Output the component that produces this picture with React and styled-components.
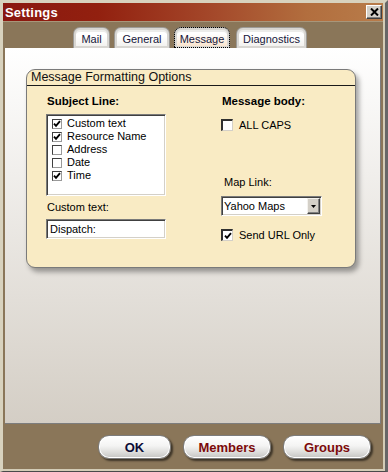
import styled, { createGlobalStyle } from 'styled-components';

const GlobalStyle = createGlobalStyle`
  html, body {
    margin: 0;
    padding: 0;
    background: #ffffff;
  }
  body {
    font-family: "Liberation Sans", Arial, sans-serif;
    font-size: 11px;
    color: #000;
  }
  * {
    box-sizing: border-box;
  }
`;

const Frame = styled.div`
  width: 388px;
  height: 472px;
  border-style: solid;
  border-width: 3px 3px 1px 3px;
  border-color: #d8d2be #676767 #4a4a4a #d8d2be;
`;
const FrameInner = styled.div`
  height: 100%;
  display: flex;
  flex-direction: column;
  background: #8a7659;
  border-right: 2px solid #d3ccb6;
  border-bottom: 2px solid #d3ccb6;
`;

const TitleBar = styled.header`
  height: 19px;
  flex: 0 0 19px;
  display: flex;
  align-items: center;
  justify-content: space-between;
  padding: 0 1px 0 2px;
  border-bottom: 1px solid #a8967a;
  background: linear-gradient(to right, #8a1810 0%, #92200f 25%, #a4482a 55%, #b26e3e 80%, #b87c4a 100%);
`;
const TitleText = styled.span`
  color: #ffffff;
  font-weight: bold;
  font-size: 13px;
  letter-spacing: 0.2px;
`;
const CloseButton = styled.button`
  width: 16px;
  height: 14px;
  padding: 0;
  display: flex;
  align-items: center;
  justify-content: center;
  background: #d4d0c8;
  border-style: solid;
  border-width: 1px;
  border-color: #ffffff #404040 #404040 #ffffff;
  box-shadow: inset -1px -1px 0 #808080;
`;

const TabStrip = styled.nav`
  display: flex;
  gap: 4px;
  margin-top: 5px;
  padding-left: 70px;
  height: 21px;
`;
const Tab = styled.div`
  width: ${(p) => p.$w}px;
  height: 21px;
  margin-right: ${(p) => p.$mr || 0}px;
  display: flex;
  justify-content: center;
  padding-top: 5px;
  font-size: 11px;
  color: #16163a;
  border: 1px solid #9c9a96;
  border-bottom: none;
  border-radius: 7px 7px 0 0;
  box-shadow: inset 0 0 0 2px #d8d6d2, inset 0 3px 0 1px #ececea;
  background: ${(p) =>
    p.$active
      ? 'linear-gradient(#ffffff 30%, #f9e0c6)'
      : 'linear-gradient(#ffffff 40%, #f0efec)'};
  outline: ${(p) => (p.$active ? '1px dotted #000' : 'none')};
  outline-offset: -1px;
`;

const Panel = styled.section`
  margin-left: 2px;
  width: 376px;
  height: 376px;
  flex: 0 0 376px;
  padding: 21px 0 0 21px;
  background: linear-gradient(#ffffff, #d4cec5);
  border-right: 1px solid #7d7d7d;
  border-bottom: 1px solid #7d7d7d;
`;

const GroupBox = styled.div`
  width: 330px;
  height: 199px;
  border: 1px solid #7a7a7a;
  border-radius: 9px;
  background: #f9ebc4;
  box-shadow: 3px 4px 5px rgba(0, 0, 0, 0.35);
`;
const GroupHeader = styled.div`
  height: 16px;
  padding-left: 4px;
  font-size: 12.5px;
  line-height: 15px;
  color: #101010;
  border-bottom: 1px solid #1a1a1a;
`;
const GroupBody = styled.div`
  display: grid;
  grid-template-columns: 175px 1fr;
  padding: 8px 0 0 19px;
`;
const Column = styled.div`
  display: flex;
  flex-direction: column;
  align-items: flex-start;
`;

const SectionLabel = styled.div`
  font-weight: bold;
  font-size: 11.5px;
  line-height: 14px;
  padding-left: 1px;
`;
const FieldLabel = styled.div`
  font-size: 11px;
  line-height: 13px;
  margin-top: ${(p) => p.$mt}px;
  padding-left: ${(p) => p.$pl || 1}px;
`;

const sunken = `
  border: 1px solid;
  border-color: #7a7a7a #ffffff #ffffff #7a7a7a;
  box-shadow: inset 1px 1px 0 #404040, inset -1px -1px 0 #d4d0c8;
`;

const ListBox = styled.div`
  margin-top: 6px;
  width: 120px;
  height: 82px;
  padding: 2px 0 0 5px;
  background: #ffffff;
  ${sunken}
`;
const ListRow = styled.div`
  height: 13px;
  display: flex;
  align-items: center;
  gap: 5px;
  line-height: 13px;
`;

const Box = styled.span`
  display: inline-flex;
  align-items: center;
  justify-content: center;
  width: ${(p) => p.$size}px;
  height: ${(p) => p.$size}px;
  flex: 0 0 ${(p) => p.$size}px;
  background: #ffffff;
  border-style: solid;
  border-width: ${(p) => (p.$size > 10 ? '2px 1px 1px 2px' : '1px')};
  border-color: ${(p) =>
    p.$size > 10 ? '#303030 #d4d0c8 #d4d0c8 #303030' : '#404040 #9a9a9a #9a9a9a #404040'};
`;

const TextInput = styled.div`
  margin-top: 5px;
  width: 120px;
  height: 20px;
  padding-left: 3px;
  display: flex;
  align-items: center;
  background: #ffffff;
  ${sunken}
`;

const CheckRow = styled.div`
  margin-top: ${(p) => p.$mt}px;
  height: 14px;
  display: flex;
  align-items: center;
  gap: 6px;
`;

const Select = styled.div`
  margin-top: 7px;
  width: 101px;
  height: 20px;
  display: flex;
  align-items: center;
  justify-content: space-between;
  padding: 0 1px 0 2px;
  background: #ffffff;
  ${sunken}
`;
const DropButton = styled.span`
  width: 13px;
  height: 16px;
  display: flex;
  align-items: center;
  justify-content: center;
  background: #d4d0c8;
  border-style: solid;
  border-width: 1px;
  border-color: #f4f2ee #404040 #404040 #f4f2ee;
  box-shadow: inset -1px -1px 0 #808080;
`;

const ButtonBar = styled.footer`
  display: flex;
  gap: 12px;
  margin-top: 11px;
  padding-left: 95px;
`;
const PillButton = styled.button`
  width: ${(p) => p.$w}px;
  height: 24px;
  padding: 0;
  font-family: "Liberation Sans", Arial, sans-serif;
  font-weight: bold;
  font-size: 13px;
  color: ${(p) => p.$color};
  border: 1px solid #7c7c7c;
  border-radius: 11px;
  background: linear-gradient(#ffffff 0%, #f4f4f3 45%, #dcdcda 75%, #c4c4c2 100%);
  box-shadow: 2px 2px 2px rgba(0, 0, 0, 0.55), inset 0 0 0 1px #ffffff;
`;

function Check() {
  return (
    <svg width="8" height="8" viewBox="0 0 8 8">
      <path d="M1 3.6 L3 5.8 L7 1.2" fill="none" stroke="#000" strokeWidth="1.9" />
    </svg>
  );
}

function CheckBox({ checked, size = 10 }) {
  return <Box $size={size}>{checked && <Check />}</Box>;
}

const subjectItems = [
  { label: 'Custom text', checked: true },
  { label: 'Resource Name', checked: true },
  { label: 'Address', checked: false },
  { label: 'Date', checked: false },
  { label: 'Time', checked: true },
];

export default function App() {
  return (
    <>
      <GlobalStyle />
      <Frame>
        <FrameInner>
          <TitleBar>
            <TitleText>Settings</TitleText>
            <CloseButton aria-label="Close">
              <svg width="9" height="8" viewBox="0 0 9 8">
                <path d="M1 0.5 L8 7.5 M8 0.5 L1 7.5" stroke="#000" strokeWidth="2" />
              </svg>
            </CloseButton>
          </TitleBar>

          <TabStrip>
            <Tab $w={37}>Mail</Tab>
            <Tab $w={56}>General</Tab>
            <Tab $w={56} $active $mr={2}>Message</Tab>
            <Tab $w={71}>Diagnostics</Tab>
          </TabStrip>

          <Panel>
            <GroupBox>
              <GroupHeader>Message Formatting Options</GroupHeader>
              <GroupBody>
                <Column>
                  <SectionLabel>Subject Line:</SectionLabel>
                  <ListBox>
                    {subjectItems.map((it) => (
                      <ListRow key={it.label}>
                        <CheckBox checked={it.checked} />
                        {it.label}
                      </ListRow>
                    ))}
                  </ListBox>
                  <FieldLabel $mt={5}>Custom text:</FieldLabel>
                  <TextInput>Dispatch:</TextInput>
                </Column>
                <Column>
                  <SectionLabel>Message body:</SectionLabel>
                  <CheckRow $mt={10}>
                    <CheckBox size={12} />
                    ALL CAPS
                  </CheckRow>
                  <FieldLabel $mt={44} $pl={3}>Map Link:</FieldLabel>
                  <Select>
                    Yahoo Maps
                    <DropButton>
                      <svg width="5" height="3" viewBox="0 0 5 3">
                        <path d="M0 0 H5 L2.5 3 Z" fill="#000" />
                      </svg>
                    </DropButton>
                  </Select>
                  <CheckRow $mt={12}>
                    <CheckBox size={12} checked />
                    Send URL Only
                  </CheckRow>
                </Column>
              </GroupBody>
            </GroupBox>
          </Panel>

          <ButtonBar>
            <PillButton $w={73} $color="#0c0c36">OK</PillButton>
            <PillButton $w={88} $color="#7c0a0a">Members</PillButton>
            <PillButton $w={88} $color="#7c0a0a">Groups</PillButton>
          </ButtonBar>
        </FrameInner>
      </Frame>
    </>
  );
}
